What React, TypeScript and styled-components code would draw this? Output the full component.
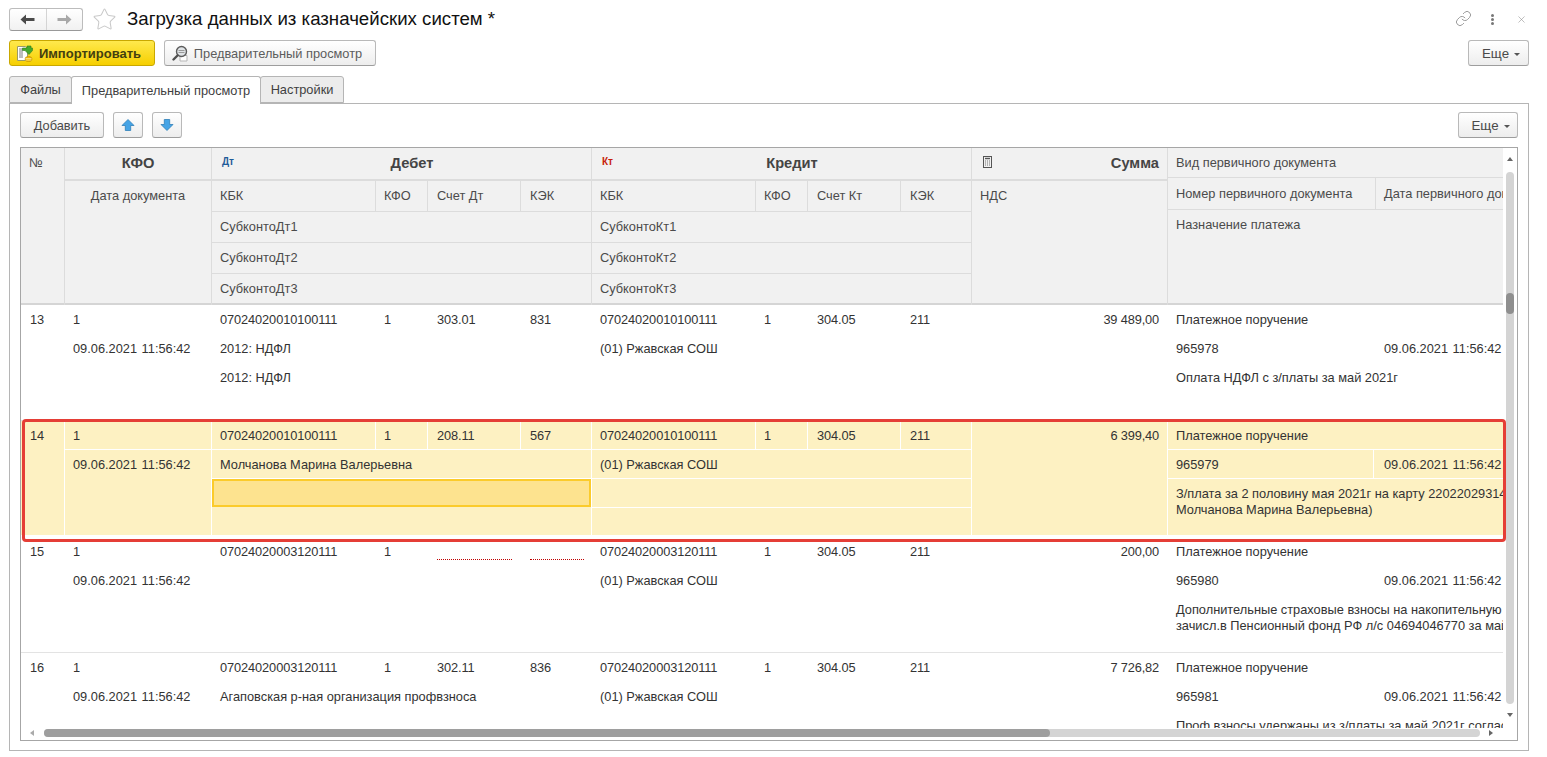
import React from 'react';
import styled, { createGlobalStyle } from 'styled-components';
import { Link as LinkIcon, Star, X } from 'lucide-react';

const GlobalStyle = createGlobalStyle`
  html, body {
    margin: 0;
    padding: 0;
    background: #fff;
    overflow: hidden;
  }
  body {
    font-family: "Liberation Sans", Arial, sans-serif;
    font-size: 12.8px;
    color: #333;
  }
`;

const Page = styled.div`
  width: 1547px;
  height: 757px;
  padding: 8px 18px 6px 9px;
  box-sizing: border-box;
  display: flex;
  flex-direction: column;
`;

const TitleBar = styled.div`
  display: flex;
  align-items: center;
  height: 23px;
  flex: none;
`;

const NavGroup = styled.div`
  display: flex;
  width: 74px;
  height: 23px;
  box-sizing: border-box;
  border: 1px solid #bcbcbc;
  border-bottom-color: #999;
  border-radius: 3px;
  background: linear-gradient(#fff, #f1f1f1);
`;

const NavButton = styled.div<{ $right?: boolean }>`
  flex: 1;
  display: flex;
  align-items: center;
  justify-content: center;
  color: ${(p) => (p.$right ? '#a8a8a8' : '#4a4a4a')};
  border-left: ${(p) => (p.$right ? '1px solid #d4d4d4' : 'none')};
`;

const Favorite = styled.div`
  margin-left: 8px;
  width: 26px;
  display: flex;
  justify-content: center;
  color: #c9c9c9;
`;

const Title = styled.h1`
  margin: -2px 0 0 10px;
  font-size: 18.67px;
  font-weight: 400;
  color: #111;
  white-space: nowrap;
`;

const WindowActions = styled.div`
  margin-left: auto;
  padding-right: 2px;
  display: flex;
  align-items: center;
  color: #8a8a8a;
`;

const LinkWrap = styled.div`
  display: flex;
  margin-top: -2px;
`;

const Dots = styled.div`
  margin-left: 19px;
  margin-right: 22px;
  display: flex;
  flex-direction: column;
  gap: 1px;
  i {
    display: block;
    width: 3px;
    height: 3px;
    border-radius: 50%;
    background: #777;
  }
`;

const CommandBar = styled.div`
  display: flex;
  flex: none;
  margin-top: 9px;
  gap: 9px;
`;

const Button = styled.div<{ $w?: number; $h?: number }>`
  width: ${(p) => (p.$w ? `${p.$w}px` : 'auto')};
  height: ${(p) => p.$h || 26}px;
  box-sizing: border-box;
  display: flex;
  align-items: center;
  justify-content: center;
  border: 1px solid #b9b9b9;
  border-bottom-color: #9d9d9d;
  border-radius: 3px;
  background: linear-gradient(#fff, #ededed);
  color: #4a4a4a;
  white-space: nowrap;
`;

const ImportButton = styled(Button)`
  border-color: #c9a800;
  background: linear-gradient(#ffe94d, #f6cf00);
  color: #43400f;
  font-weight: 700;
  font-size: 13px;
  gap: 6px;
  padding-right: 7px;
`;

const PreviewButton = styled(Button)`
  gap: 5px;
  color: #5c5c5c;
  padding-right: 6px;
`;

const MoreButton = styled(Button)`
  margin-left: auto;
  gap: 5px;
  font-size: 13.3px;
  padding-left: 5px;
  &::after {
    content: '';
    border: 3px solid transparent;
    border-top: 3px solid #555;
    border-bottom: 0;
    margin-top: 2px;
  }
`;

const Tabs = styled.div`
  display: flex;
  flex: none;
  margin-top: 10px;
  height: 27px;
  position: relative;
  z-index: 1;
`;

const Tab = styled.div<{ $w: number; $active?: boolean }>`
  width: ${(p) => p.$w}px;
  box-sizing: border-box;
  height: ${(p) => (p.$active ? 28 : 27)}px;
  display: flex;
  align-items: center;
  justify-content: center;
  border: 1px solid #b5b5b5;
  border-bottom: ${(p) => (p.$active ? 'none' : '1px solid #b5b5b5')};
  border-radius: 3px 3px 0 0;
  background: ${(p) => (p.$active ? '#fff' : '#ececec')};
  color: #3f3f3f;
  margin-right: -1px;
`;

const TabPanel = styled.div`
  flex: 1;
  min-height: 0;
  width: 1520px;
  box-sizing: border-box;
  border: 1px solid #b5b5b5;
  padding: 8px 10px 9px 10px;
  display: flex;
  flex-direction: column;
`;

const PanelToolbar = styled.div`
  display: flex;
  flex: none;
  gap: 9px;
  height: 26px;
`;

const TableFrame = styled.div`
  margin-top: 9px;
  flex: 1;
  min-height: 0;
  position: relative;
  border: 1px solid #a6a6a6;
  width: 1498px;
  box-sizing: border-box;
  display: grid;
  grid-template-columns: 1482px 14px;
  grid-template-rows: minmax(0, 1fr) 12px;
`;

const Viewport = styled.div`
  grid-column: 1;
  grid-row: 1;
  overflow: hidden;
  min-height: 0;
  min-width: 0;
`;

const columns = '44px 147px 380px 380px 196px 335px';
const subColumns = '164px 52px 93px 71px';

const HeaderGrid = styled.div`
  display: grid;
  grid-template-columns: ${columns};
  height: 157px;
  background: #f1f1f1;
  border-bottom: 2px solid #d5d5d5;
  box-sizing: border-box;
  color: #4b4b4b;
`;

const HeadColumn = styled.div<{ $last?: boolean }>`
  display: flex;
  flex-direction: column;
  min-width: 0;
  border-right: ${(p) => (p.$last ? 'none' : '1px solid #dcdcdc')};
`;

const NumberHead = styled.div`
  padding: 7px 0 0 8px;
  border-right: 1px solid #dcdcdc;
`;

const HeadCaption = styled.div`
  height: 33px;
  flex: none;
  box-sizing: border-box;
  display: flex;
  align-items: center;
  padding: 0 8px 2px;
  font-weight: 700;
  font-size: 14.67px;
  color: #444;
  border-bottom: 2px solid #dcdcdc;
`;

const CenterText = styled.span`
  flex: 1;
  text-align: center;
`;

const RightText = styled.span`
  flex: 1;
  text-align: right;
`;

const AccountMark = styled.span<{ $color: string }>`
  width: 19px;
  font-size: 10px;
  font-weight: 700;
  color: ${(p) => p.$color};
  margin-top: -2px;
  margin-left: 2px;
`;

const SubRow = styled.div`
  display: grid;
  grid-template-columns: ${subColumns};
  height: 31px;
  flex: none;
  box-sizing: border-box;
  border-bottom: 1px solid #dcdcdc;
`;

const SubHead = styled.div<{ $pad?: number; $last?: boolean }>`
  display: flex;
  align-items: center;
  padding: 0 0 2px ${(p) => p.$pad || 8}px;
  border-right: ${(p) => (p.$last ? 'none' : '1px solid #dcdcdc')};
`;

const WideHead = styled.div<{ $last?: boolean }>`
  height: 31px;
  flex: none;
  box-sizing: border-box;
  display: flex;
  align-items: center;
  padding: 0 0 2px 8px;
  border-bottom: ${(p) => (p.$last ? 'none' : '1px solid #dcdcdc')};
`;

const PlainHead = styled.div<{ $center?: boolean }>`
  padding: 7px 8px 0;
  text-align: ${(p) => (p.$center ? 'center' : 'left')};
`;

const DocHeadLine = styled.div<{ $h: number }>`
  height: ${(p) => p.$h}px;
  flex: none;
  box-sizing: border-box;
  display: flex;
  align-items: center;
  border-bottom: 1px solid #dcdcdc;
  white-space: nowrap;
  overflow: hidden;
`;

const DocHeadCell = styled.div<{ $w?: number }>`
  width: ${(p) => (p.$w ? `${p.$w}px` : 'auto')};
  flex: ${(p) => (p.$w ? 'none' : 1)};
  height: 100%;
  box-sizing: border-box;
  display: flex;
  align-items: center;
  padding-left: 8px;
  border-right: ${(p) => (p.$w ? '1px solid #dcdcdc' : 'none')};
`;

const Row = styled.div<{ $selected?: boolean }>`
  display: grid;
  grid-template-columns: ${columns};
  height: 116px;
  box-sizing: border-box;
  background: ${(p) => (p.$selected ? '#fdf1c2' : '#fff')};
  border-bottom: ${(p) => (p.$selected ? '2px solid #fff' : '1px solid #e3e3e3')};
  color: #333;
  --line: ${(p) => (p.$selected ? '#fff' : 'transparent')};
`;

const NumberCell = styled.div`
  padding: 0 0 0 9px;
  line-height: 29px;
  border-right: 1px solid var(--line);
`;

const Column = styled.div<{ $last?: boolean }>`
  display: flex;
  flex-direction: column;
  min-width: 0;
  overflow: hidden;
  border-right: ${(p) => (p.$last ? 'none' : '1px solid var(--line)')};
`;

const Line = styled.div<{ $end?: boolean; $current?: boolean }>`
  height: 29px;
  flex: none;
  box-sizing: border-box;
  padding-left: 8px;
  line-height: 29px;
  white-space: nowrap;
  border-bottom: ${(p) => (p.$end ? 'none' : '1px solid var(--line)')};
  ${(p) =>
    p.$current
      ? 'background: #fde38f; border: 2px solid #fbcb2b; height: 28px; margin-bottom: 1px; line-height: 24px;'
      : ''}
`;

const Split = styled.div`
  display: grid;
  grid-template-columns: ${subColumns};
  height: 29px;
  flex: none;
  border-bottom: 1px solid var(--line);
  box-sizing: border-box;
`;

const SplitCell = styled.div<{ $pad?: number; $last?: boolean; $empty?: boolean }>`
  padding-left: ${(p) => p.$pad || 8}px;
  line-height: 29px;
  letter-spacing: -0.1px;
  position: relative;
  border-right: ${(p) => (p.$last ? 'none' : '1px solid var(--line)')};
  ${(p) =>
    p.$empty
      ? `&::after {
          content: '';
          position: absolute;
          left: ${p.$pad || 8}px;
          right: 8px;
          top: 22px;
          border-bottom: 1px dotted #c00000;
        }`
      : ''}
`;

const DateText = styled.span`
  word-spacing: 1px;
`;

const Amount = styled.div`
  line-height: 29px;
  text-align: right;
  padding-right: 8px;
  letter-spacing: -0.15px;
`;

const DocLine = styled.div`
  display: flex;
  height: 29px;
  flex: none;
  box-sizing: border-box;
  border-bottom: 1px solid var(--line);
`;

const DocCell = styled.div<{ $w?: number; $pad?: number }>`
  width: ${(p) => (p.$w ? `${p.$w}px` : 'auto')};
  flex: ${(p) => (p.$w ? 'none' : 1)};
  padding-left: ${(p) => p.$pad || 8}px;
  box-sizing: border-box;
  line-height: 29px;
  white-space: nowrap;
  border-right: ${(p) => (p.$w ? '1px solid var(--line)' : 'none')};
`;

const Purpose = styled.div`
  padding: 7px 0 0 8px;
  line-height: 16px;
  white-space: nowrap;
`;

const Marker = styled.div`
  position: absolute;
  left: 1px;
  top: 271px;
  width: 1484px;
  height: 123px;
  box-sizing: border-box;
  border: 3px solid #e53e36;
  border-radius: 4px;
  pointer-events: none;
`;

const VerticalBar = styled.div`
  grid-column: 2;
  grid-row: 1 / 3;
  position: relative;
  display: flex;
  flex-direction: column;
  align-items: center;
`;

const VerticalTrack = styled.div`
  margin-top: 24px;
  width: 8px;
  height: 532px;
  border-radius: 4px;
  background: #d4d4d4;
  padding-top: 121px;
  box-sizing: border-box;
`;

const VerticalThumb = styled.div`
  height: 21px;
  border-radius: 4px;
  background: #8f8f8f;
`;

const HorizontalBar = styled.div`
  grid-column: 1;
  grid-row: 2;
  position: relative;
  padding: 1px 0 0 23px;
`;

const HorizontalTrack = styled.div`
  width: 1436px;
  height: 8px;
  border-radius: 4px;
  background: #d4d4d4;
`;

const HorizontalThumb = styled.div`
  width: 1006px;
  height: 8px;
  border-radius: 4px;
  background: #9e9e9e;
`;

const ScrollArrow = styled.span<{ $dir: 'up' | 'down' | 'left' | 'right' }>`
  position: absolute;
  width: 0;
  height: 0;
  border: 3px solid transparent;
  ${(p) =>
    ({
      up: 'top: 9px; left: 4px; border-top: 0; border-bottom: 4px solid #666;',
      down: 'bottom: 23px; left: 4px; border-bottom: 0; border-top: 4px solid #666;',
      left: 'top: 2px; left: 9px; border-left: 0; border-right: 4px solid #aaa;',
      right: 'top: 2px; left: 1468px; border-right: 0; border-left: 4px solid #666;',
    })[p.$dir]}
`;

const NavArrow = ({ right }: { right?: boolean }) => (
  <svg width="15" height="11" viewBox="0 0 15 11" style={right ? { transform: 'scaleX(-1)' } : undefined}>
    <path d="M0.5 5.5 6 0.5V4H14.5V7H6V10.5z" fill="currentColor" />
  </svg>
);

const ImportIcon = () => (
  <svg width="17" height="17" viewBox="0 0 17 17">
    <path d="M1.5 1.5h8l2 2v12h-10z" fill="#fff" stroke="#9a9a6a" />
    <path d="M3 4h5M3 6h4M3 8h4M3 10h4M3 12h4" stroke="#7d7d7d" />
    <path d="M6.5 3H11V1h4v2h1.5v2.5L13 9.5 9 5.5H6.5z" fill="#45a82c" stroke="#2d7d1b" strokeWidth=".6" />
    <ellipse cx="12.5" cy="14" rx="3.5" ry="2.6" fill="#f2b705" stroke="#b98a00" strokeWidth=".6" />
    <path d="M9.5 13.5h6M9.5 15h6" stroke="#fff1a8" strokeWidth=".7" />
  </svg>
);

const PreviewIcon = () => (
  <svg width="17" height="17" viewBox="0 0 17 17">
    <path d="M8 10.5h7v5.5H8z" fill="#fff" stroke="#b5b5b5" />
    <circle cx="9.5" cy="6.5" r="5" fill="#dfe3e6" stroke="#5c5c5c" strokeWidth="1.4" />
    <path d="M6.5 5.5h6M6.5 7.5h6" stroke="#9a9a9a" />
    <path d="M5.5 10.5 1.5 14.5" stroke="#4f4f4f" strokeWidth="2.4" strokeLinecap="round" />
  </svg>
);

const MoveIcon = ({ down }: { down?: boolean }) => (
  <svg width="14" height="14" viewBox="0 0 14 14" style={down ? { transform: 'rotate(180deg)' } : undefined}>
    <path d="M7 1.5 13 7.5H9.7V12.5H4.3V7.5H1z" fill="#45a4e6" stroke="#2f7fb8" strokeWidth=".8" />
  </svg>
);

const CalcIcon = () => (
  <svg width="11" height="12" viewBox="0 0 11 12" fill="none" style={{ marginLeft: 2, marginTop: -2 }}>
    <rect x="1.5" y="0.5" width="8" height="11" stroke="#555" />
    <path d="M3 2.5h5" stroke="#555" strokeWidth="1.4" />
    <path d="M3 5h1M5 5h1M7 5h1M3 7h1M5 7h1M7 7h1M3 9h1M5 9h1M7 9h1" stroke="#777" />
  </svg>
);

type RowData = {
  no: string;
  kbkDt: string;
  accountDt: string;
  kekDt: string;
  subDt1: string;
  subDt2: string;
  kbkKt: string;
  amount: string;
  docNo: string;
  purpose: React.ReactNode;
};

const date = '09.06.2021 11:56:42';

const rows: RowData[] = [
  {
    no: '13',
    kbkDt: '07024020010100111',
    accountDt: '303.01',
    kekDt: '831',
    subDt1: '2012: НДФЛ',
    subDt2: '2012: НДФЛ',
    kbkKt: '07024020010100111',
    amount: '39 489,00',
    docNo: '965978',
    purpose: 'Оплата НДФЛ с з/платы за май 2021г',
  },
  {
    no: '14',
    kbkDt: '07024020010100111',
    accountDt: '208.11',
    kekDt: '567',
    subDt1: 'Молчанова Марина Валерьевна',
    subDt2: '',
    kbkKt: '07024020010100111',
    amount: '6 399,40',
    docNo: '965979',
    purpose: (
      <>
        З/плата за 2 половину мая 2021г на карту 22022029314
        <br />
        Молчанова Марина Валерьевна)
      </>
    ),
  },
  {
    no: '15',
    kbkDt: '07024020003120111',
    accountDt: '',
    kekDt: '',
    subDt1: '',
    subDt2: '',
    kbkKt: '07024020003120111',
    amount: '200,00',
    docNo: '965980',
    purpose: (
      <>
        Дополнительные страховые взносы на накопительную
        <br />
        зачисл.в Пенсионный фонд РФ л/с 04694046770 за май
      </>
    ),
  },
  {
    no: '16',
    kbkDt: '07024020003120111',
    accountDt: '302.11',
    kekDt: '836',
    subDt1: 'Агаповская р-ная организация профвзноса',
    subDt2: '',
    kbkKt: '07024020003120111',
    amount: '7 726,82',
    docNo: '965981',
    purpose: 'Проф.взносы удержаны из з/платы за май 2021г согласно',
  },
];

const DataRow = ({ row }: { row: RowData }) => {
  const selected = row.no === '14';
  return (
    <Row $selected={selected}>
      <NumberCell>{row.no}</NumberCell>
      <Column>
        <Line>1</Line>
        <Line $end>
          <DateText>{date}</DateText>
        </Line>
      </Column>
      <Column>
        <Split>
          <SplitCell>{row.kbkDt}</SplitCell>
          <SplitCell>1</SplitCell>
          <SplitCell $pad={9} $empty={!row.accountDt}>{row.accountDt}</SplitCell>
          <SplitCell $pad={9} $last $empty={!row.kekDt}>{row.kekDt}</SplitCell>
        </Split>
        <Line>{row.subDt1}</Line>
        <Line $current={selected}>{row.subDt2}</Line>
        <Line $end />
      </Column>
      <Column>
        <Split>
          <SplitCell>{row.kbkKt}</SplitCell>
          <SplitCell>1</SplitCell>
          <SplitCell $pad={9}>304.05</SplitCell>
          <SplitCell $pad={9} $last>211</SplitCell>
        </Split>
        <Line>(01) Ржавская СОШ</Line>
        <Line />
        <Line $end />
      </Column>
      <Column>
        <Amount>{row.amount}</Amount>
      </Column>
      <Column $last>
        <DocLine>
          <DocCell>Платежное поручение</DocCell>
        </DocLine>
        <DocLine>
          <DocCell $w={206}>{row.docNo}</DocCell>
          <DocCell $pad={10}>
            <DateText>{date}</DateText>
          </DocCell>
        </DocLine>
        <Purpose>{row.purpose}</Purpose>
      </Column>
    </Row>
  );
};

const App: React.FC = () => {
  return (
    <>
      <GlobalStyle />
      <Page>
        <TitleBar>
          <NavGroup>
            <NavButton>
              <NavArrow />
            </NavButton>
            <NavButton $right>
              <NavArrow right />
            </NavButton>
          </NavGroup>
          <Favorite>
            <Star size={25} strokeWidth={1} />
          </Favorite>
          <Title>Загрузка данных из казначейских систем *</Title>
          <WindowActions>
            <LinkWrap>
              <LinkIcon size={17} strokeWidth={1.2} />
            </LinkWrap>
            <Dots>
              <i />
              <i />
              <i />
            </Dots>
            <X size={11} strokeWidth={1.2} />
          </WindowActions>
        </TitleBar>

        <CommandBar>
          <ImportButton $w={146}>
            <ImportIcon />
            Импортировать
          </ImportButton>
          <PreviewButton $w={212}>
            <PreviewIcon />
            Предварительный просмотр
          </PreviewButton>
          <MoreButton $w={61}>Еще</MoreButton>
        </CommandBar>

        <Tabs>
          <Tab $w={63}>Файлы</Tab>
          <Tab $w={190} $active>
            Предварительный просмотр
          </Tab>
          <Tab $w={84}>Настройки</Tab>
        </Tabs>

        <TabPanel>
          <PanelToolbar>
            <Button $w={84}>Добавить</Button>
            <Button $w={30}>
              <MoveIcon />
            </Button>
            <Button $w={30}>
              <MoveIcon down />
            </Button>
            <MoreButton $w={60}>Еще</MoreButton>
          </PanelToolbar>

          <TableFrame>
            <Viewport>
              <HeaderGrid>
                <NumberHead>№</NumberHead>
                <HeadColumn>
                  <HeadCaption>
                    <CenterText>КФО</CenterText>
                  </HeadCaption>
                  <PlainHead $center>Дата документа</PlainHead>
                </HeadColumn>
                <HeadColumn>
                  <HeadCaption>
                    <AccountMark $color="#1f5c99">Дт</AccountMark>
                    <CenterText>Дебет</CenterText>
                  </HeadCaption>
                  <SubRow>
                    <SubHead>КБК</SubHead>
                    <SubHead>КФО</SubHead>
                    <SubHead $pad={9}>Счет Дт</SubHead>
                    <SubHead $pad={9} $last>КЭК</SubHead>
                  </SubRow>
                  <WideHead>СубконтоДт1</WideHead>
                  <WideHead>СубконтоДт2</WideHead>
                  <WideHead $last>СубконтоДт3</WideHead>
                </HeadColumn>
                <HeadColumn>
                  <HeadCaption>
                    <AccountMark $color="#c81e0a">Кт</AccountMark>
                    <CenterText>Кредит</CenterText>
                  </HeadCaption>
                  <SubRow>
                    <SubHead>КБК</SubHead>
                    <SubHead>КФО</SubHead>
                    <SubHead $pad={9}>Счет Кт</SubHead>
                    <SubHead $pad={9} $last>КЭК</SubHead>
                  </SubRow>
                  <WideHead>СубконтоКт1</WideHead>
                  <WideHead>СубконтоКт2</WideHead>
                  <WideHead $last>СубконтоКт3</WideHead>
                </HeadColumn>
                <HeadColumn>
                  <HeadCaption>
                    <CalcIcon />
                    <RightText>Сумма</RightText>
                  </HeadCaption>
                  <PlainHead>НДС</PlainHead>
                </HeadColumn>
                <HeadColumn $last>
                  <DocHeadLine $h={30}>
                    <DocHeadCell>Вид первичного документа</DocHeadCell>
                  </DocHeadLine>
                  <DocHeadLine $h={32}>
                    <DocHeadCell $w={208}>Номер первичного документа</DocHeadCell>
                    <DocHeadCell>Дата первичного документа</DocHeadCell>
                  </DocHeadLine>
                  <PlainHead>Назначение платежа</PlainHead>
                </HeadColumn>
              </HeaderGrid>
              {rows.map((row) => (
                <DataRow key={row.no} row={row} />
              ))}
            </Viewport>
            <VerticalBar>
              <ScrollArrow $dir="up" />
              <VerticalTrack>
                <VerticalThumb />
              </VerticalTrack>
              <ScrollArrow $dir="down" />
            </VerticalBar>
            <HorizontalBar>
              <ScrollArrow $dir="left" />
              <HorizontalTrack>
                <HorizontalThumb />
              </HorizontalTrack>
              <ScrollArrow $dir="right" />
            </HorizontalBar>
            <Marker />
          </TableFrame>
        </TabPanel>
      </Page>
    </>
  );
};

export default App;
